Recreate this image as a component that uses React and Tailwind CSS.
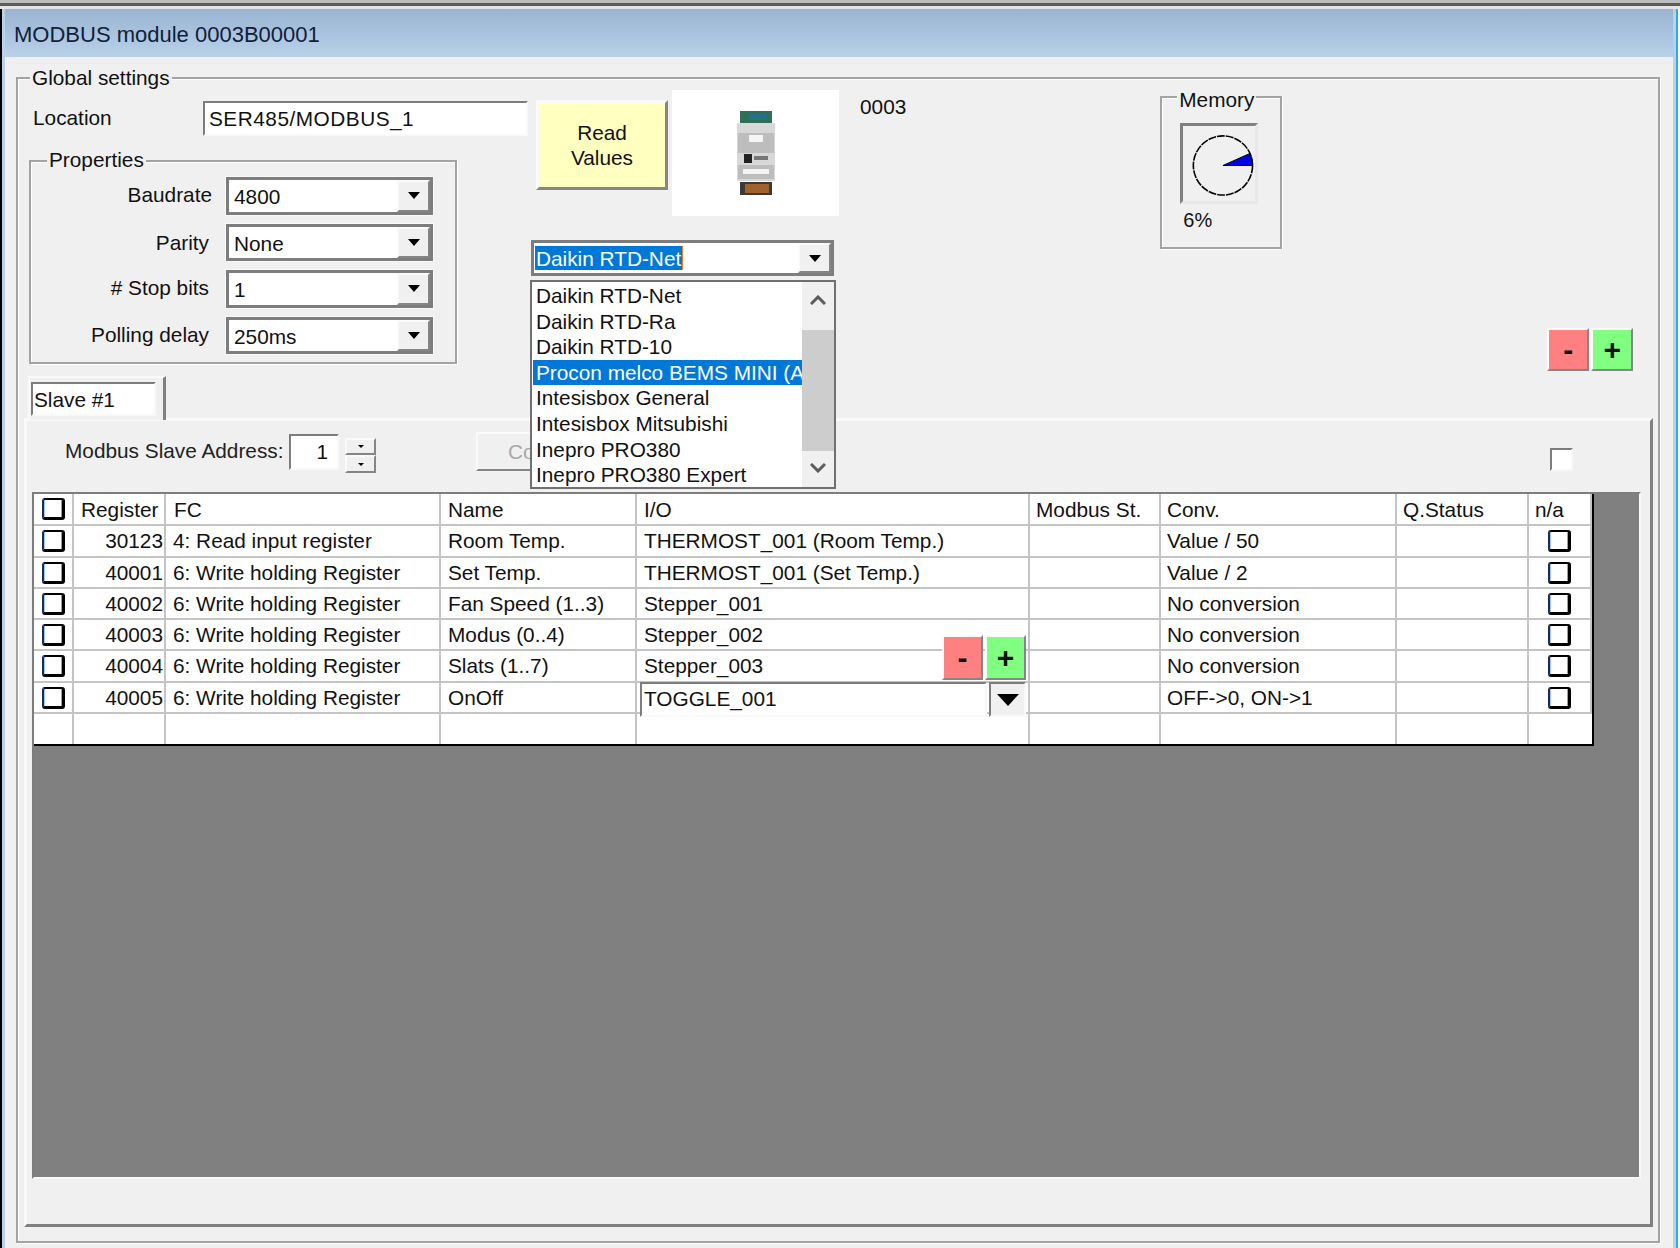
import React from 'react';

const sunken = 'border-2 border-t-[#7d7d7d] border-l-[#7d7d7d] border-r-[#f9f9f9] border-b-[#f9f9f9]';
const raised = 'border-2 border-t-[#fafafa] border-l-[#fafafa] border-r-[#858585] border-b-[#858585]';

const rows = [
  ['30123', '4: Read input register', 'Room Temp.', 'THERMOST_001 (Room Temp.)', 'Value / 50'],
  ['40001', '6: Write holding Register', 'Set Temp.', 'THERMOST_001 (Set Temp.)', 'Value / 2'],
  ['40002', '6: Write holding Register', 'Fan Speed (1..3)', 'Stepper_001', 'No conversion'],
  ['40003', '6: Write holding Register', 'Modus (0..4)', 'Stepper_002', 'No conversion'],
  ['40004', '6: Write holding Register', 'Slats (1..7)', 'Stepper_003', 'No conversion'],
  ['40005', '6: Write holding Register', 'OnOff', '', 'OFF->0, ON->1'],
];

const listItems = [
  'Daikin RTD-Net',
  'Daikin RTD-Ra',
  'Daikin RTD-10',
  'Procon melco BEMS MINI (A',
  'Intesisbox General',
  'Intesisbox Mitsubishi',
  'Inepro PRO380',
  'Inepro PRO380 Expert',
];

const gridCols = 'grid grid-cols-[40px_92px_275px_196px_393px_131px_236px_132px_63px]';
const cell = 'border-r-2 border-b-2 border-[#c4c4c4] h-[31.3px] leading-[30px] whitespace-nowrap overflow-hidden';
const head = 'border-r-2 border-b-2 border-[#c4c4c4] h-[32.3px] leading-[31px] whitespace-nowrap overflow-hidden';

const Arrow = ({ className = 'w-[12px] h-[7px]' }) => (
  <svg viewBox="0 0 14 8" className={className} preserveAspectRatio="none">
    <polygon points="0,0 14,0 7,8" fill="#000" />
  </svg>
);

const GroupBox = ({ label, className, labelClass, children }) => (
  <div className={`relative border-2 border-[#a3a3a3] shadow-[1px_1px_0_#fff,inset_1px_1px_0_#fff] ${className}`}>
    <span className={`absolute bg-[#f0f0f0] px-[2px] leading-[26px] ${labelClass}`}>{label}</span>
    {children}
  </div>
);

const Combo = ({ value }) => (
  <div className="flex h-[37.6px] w-[207px] border-[3px] border-[#7d7d7d] bg-white shadow-[0_0_0_1px_#fafafa]">
    <span className="pl-[5px] leading-[33px]">{value}</span>
    <div className={`ml-auto flex w-[33px] items-center justify-center bg-[#f0f0f0] ${raised}`}>
      <Arrow />
    </div>
  </div>
);

const CheckMark = () => (
  <div className="h-[22px] w-[23px] rounded-[3px] border-2 border-b-[3px] border-r-[3px] border-black border-l-[#1c2c4c] bg-white shadow-[inset_-1px_0_0_#e09040,inset_1px_0_0_#a0c8f0]" />
);

const PlusMinus = ({ small }) => (
  <div className="flex gap-[2px]">
    <button className={`${small ? 'h-[45px] w-[41px]' : 'h-[43px] w-[42px]'} ${raised} bg-[#ff8080] text-[30px] font-bold leading-none`}>-</button>
    <button className={`${small ? 'h-[45px] w-[41px]' : 'h-[43px] w-[42px]'} ${raised} bg-[#80ff80] text-[30px] font-bold leading-none`}>+</button>
  </div>
);

const ModuleImage = () => (
  <svg viewBox="0 0 38 84" className="h-[84px] w-[38px] blur-[0.6px]">
    <rect x="3" y="0" width="32" height="12" fill="#2f6f5a" />
    <rect x="12" y="3" width="18" height="6" fill="#27708c" />
    <rect x="0" y="12" width="38" height="58" fill="#d8d8d8" />
    <rect x="1" y="22" width="36" height="20" fill="#bdbdbd" />
    <rect x="12" y="24" width="14" height="7" fill="#f4f4f4" />
    <rect x="7" y="43" width="8" height="9" fill="#222" />
    <rect x="17" y="45" width="14" height="4" fill="#777" />
    <rect x="1" y="54" width="36" height="14" fill="#bdbdbd" />
    <rect x="6" y="58" width="26" height="5" fill="#f4f4f4" />
    <rect x="3" y="71" width="32" height="13" fill="#3a3a3a" />
    <rect x="8" y="73" width="24" height="9" fill="#a0622e" />
  </svg>
);

const Gauge = () => (
  <svg viewBox="0 0 72 76" className="h-full w-full">
    <circle cx="40" cy="40" r="30" fill="none" stroke="#000" strokeWidth="1.6" strokeDasharray="8 1" />
    <path d="M40 40 L70 40 A30 30 0 0 0 67.4 27.8 Z" fill="#0000e0" stroke="#000" strokeWidth="1" />
  </svg>
);

export default function App() {
  return (
    <div className="flex h-[1248px] w-[1680px] flex-col overflow-hidden bg-[#f0f0f0] text-[20.8px] text-[#111] [font-family:'Liberation_Sans',sans-serif]">
      <div className="h-[3px] bg-[#bcbcbc]" />
      <div className="h-[3px] bg-[#5c5c5c]" />
      <div className="h-[3px] bg-[#e4e4e4]" />

      <div className="flex min-h-0 flex-1">
        <div className="w-[2px] bg-black" />
        <div className="w-[3px] bg-[#b9d1ea]" />

        <div className="flex w-[1668px] flex-col">
          <div className="h-[48px] bg-gradient-to-b from-[#99b4d1] to-[#b9d1ea] pl-[9px] text-[22px] leading-[52px] text-[#10203a]">
            MODBUS module 0003B00001
          </div>

          <div className="flex-1 pb-[5px] pl-[11px] pr-[13px] pt-[20px]">
            <GroupBox label="Global settings" labelClass="left-[12px] top-[-14px]" className="h-[1166px] w-[1644px]">
              {/* top part of the dialog */}
              <div className="flex h-[297px]">
                <div className="ml-[11px] w-[499px] pt-[22px]">
                  <div className="flex h-[35px] items-center">
                    <span className="ml-[4px] w-[170px] pb-[2px]">Location</span>
                    <div className={`h-[35px] w-[325px] bg-white pl-[4px] leading-[32px] tracking-[0.5px] ${sunken}`}>
                      SER485/MODBUS_1
                    </div>
                  </div>
                  <GroupBox label="Properties" labelClass="left-[16px] top-[-15px]" className="mt-[24px] h-[204px] w-[428px]">
                    <div className="flex flex-col gap-[9px] pt-[15px]">
                      {[
                        ['Baudrate', '4800', 'pr-0 pb-[3px]'],
                        ['Parity', 'None', 'pr-[3px] pb-0'],
                        ['# Stop bits', '1', 'pr-[3px] pb-[3px]'],
                        ['Polling delay', '250ms', 'pr-[3px] pb-[2px]'],
                      ].map(([label, value, nudge]) => (
                        <div key={label} className="flex items-center gap-[17px]">
                          <span className={`w-[181px] text-right ${nudge}`}>{label}</span>
                          <div className="ml-[-3px]">
                            <Combo value={value} />
                          </div>
                        </div>
                      ))}
                    </div>
                  </GroupBox>
                </div>

                <div className="relative ml-[3px] w-[309px]">
                  <div className="flex items-start">
                    <button className={`ml-[5px] mt-[21px] h-[90px] w-[132px] bg-[#ffffc0] leading-[25px] ${raised} border-[3px]`}>
                      Read
                      <br />
                      Values
                    </button>
                    <div className="ml-[4px] mt-[11px] flex h-[126px] w-[167px] items-center justify-center bg-white">
                      <ModuleImage />
                    </div>
                  </div>
                  <div className="mt-[24px] flex h-[36px] w-[303px] border-[3px] border-[#7d7d7d] bg-white">
                    <span className="ml-[1px] mt-[3px] h-[24px] border-r border-[#f08020] bg-[#0078d7] pl-[1px] pr-[1px] leading-[25px] text-white">
                      Daikin RTD-Net
                    </span>
                    <div className={`ml-auto flex w-[33px] items-center justify-center bg-[#f0f0f0] ${raised}`}>
                      <Arrow />
                    </div>
                  </div>

                  {/* open drop down list */}
                  <div className="absolute left-[-1px] top-[201px] z-20 flex h-[209px] w-[306px] border-2 border-[#707070] bg-white">
                    <div className="w-[270px] pl-[1px] pt-[1px]">
                      {listItems.map((item) => (
                        <div
                          key={item}
                          className={`h-[25.6px] overflow-hidden whitespace-nowrap pl-[3px] leading-[25.6px] ${item.startsWith('Procon') ? 'bg-[#0078d7] text-white' : ''}`}
                        >
                          {item}
                        </div>
                      ))}
                    </div>
                    <div className="flex w-[32px] flex-col items-center bg-[#f0f0f0]">
                      <svg viewBox="0 0 16 10" className="mt-[13px] h-[10px] w-[16px]">
                        <polyline points="1,9 8,2 15,9" fill="none" stroke="#5c5c5c" strokeWidth="3" />
                      </svg>
                      <div className="mt-[25px] h-[121px] w-full bg-[#cdcdcd]" />
                      <svg viewBox="0 0 16 10" className="mt-[12px] h-[10px] w-[16px]">
                        <polyline points="1,1 8,8 15,1" fill="none" stroke="#5c5c5c" strokeWidth="3" />
                      </svg>
                    </div>
                  </div>
                </div>

                <span className="ml-[20px] mt-[15px] leading-[26px]">0003</span>

                <GroupBox label="Memory" labelClass="left-[15px] top-[-11px]" className="ml-[254px] mt-[17px] h-[153px] w-[122px]">
                  <div className={`ml-[18px] mt-[25px] h-[81px] w-[78px] border-[3px] border-b-[#e8e8e8] border-l-[#808080] border-r-[#e8e8e8] border-t-[#808080]`}>
                    <Gauge />
                  </div>
                  <span className="ml-[21px] text-[20px] leading-[32px]">6%</span>
                </GroupBox>

                <div className="ml-[265px] mt-[249px]">
                  <PlusMinus />
                </div>
              </div>

              {/* tab strip + page */}
              <div className="relative z-10 mb-[-2px] ml-[10px] h-[44px] w-[138px] border-r-[3px] border-t-2 border-l-2 border-l-[#fafafa] border-r-[#808080] border-t-[#fafafa] bg-[#f0f0f0] pl-[1px] pt-[4px]">
                <div className={`h-[34px] w-[125px] bg-white pl-[1px] leading-[31px] ${sunken}`}>Slave #1</div>
              </div>
              <div className="ml-[6px] h-[809px] w-[1629px] border-[3px] border-b-[#808080] border-l-[#fafafa] border-r-[#808080] border-t-[#fafafa]">
                <div className="flex h-[71px] items-start pt-[13px]">
                  <span className="ml-[38px] mt-[1px] w-[224px] pt-[1px] leading-[30px] text-[#222]">Modbus Slave Address:</span>
                  <div className={`flex h-[36px] w-[50px] items-center justify-end bg-white pr-[9px] ${sunken}`}>1</div>
                  <div className="ml-[6px] mt-[4px] w-[31px]">
                    <div className={`flex h-[17px] items-center justify-center ${raised}`}>
                      <Arrow className="h-[3px] w-[6px]" />
                    </div>
                    <div className={`flex h-[18px] items-center justify-center ${raised}`}>
                      <Arrow className="h-[3px] w-[6px]" />
                    </div>
                  </div>
                  <div className={`ml-[100px] mt-[-2px] h-[39px] w-[120px] pl-[30px] leading-[35px] text-[#a8a8a8] ${raised}`}>Co</div>
                  <div className={`ml-auto mr-[77px] mt-[14px] h-[23px] w-[23px] bg-white ${sunken}`} />
                </div>

                {/* register grid */}
                <div className={`mb-[48px] ml-[5px] h-[687px] w-[1609px] bg-[#808080] ${sunken}`}>
                  <div className="relative w-[1560px] border-b-2 border-r-2 border-black bg-white">
                    <div className={gridCols}>
                      <div className={`${head} pl-[8px] pt-[4px]`}><CheckMark /></div>
                      <div className={`${head} pl-[7px]`}>Register</div>
                      <div className={`${head} pl-[8px]`}>FC</div>
                      <div className={`${head} pl-[7px]`}>Name</div>
                      <div className={`${head} pl-[7px]`}>I/O</div>
                      <div className={`${head} pl-[6px]`}>Modbus St.</div>
                      <div className={`${head} pl-[6px]`}>Conv.</div>
                      <div className={`${head} pl-[6px]`}>Q.Status</div>
                      <div className={`${head} border-r-0 pl-[6px]`}>n/a</div>

                      {rows.map((row) => (
                        <React.Fragment key={row[0]}>
                          <div className={`${cell} pl-[8px] pt-[4px]`}><CheckMark /></div>
                          <div className={`${cell} pr-[1px] text-right`}>{row[0]}</div>
                          <div className={`${cell} pl-[7px]`}>{row[1]}</div>
                          <div className={`${cell} pl-[7px]`}>{row[2]}</div>
                          <div className={`${cell} pl-[7px]`}>{row[3]}</div>
                          <div className={cell} />
                          <div className={`${cell} pl-[6px]`}>{row[4]}</div>
                          <div className={cell} />
                          <div className={`${cell} border-r-0 pl-[19px] pt-[4px]`}><CheckMark /></div>
                        </React.Fragment>
                      ))}

                      {[0, 1, 2, 3, 4, 5, 6, 7].map((i) => (
                        <div key={i} className="h-[30px] border-r-2 border-[#c4c4c4]" />
                      ))}
                      <div className="h-[30px]" />
                    </div>

                    {/* in-place editor on the selected row */}
                    <div className="absolute left-[606px] top-[188px] flex h-[35px] w-[386px]">
                      <div className={`h-[35px] w-[347px] bg-white pl-[2px] leading-[29px] ${sunken}`}>TOGGLE_001</div>
                      <div className={`ml-[2px] flex h-[35px] w-[37px] items-center justify-center bg-[#f0f0f0] ${sunken}`}>
                        <Arrow className="h-[12px] w-[22px]" />
                      </div>
                    </div>
                    <div className="absolute left-[908px] top-[141px]">
                      <PlusMinus small />
                    </div>
                  </div>
                </div>
              </div>
            </GroupBox>
          </div>
        </div>

        <div className="w-[3px] bg-[#b9d1ea]" />
        <div className="w-[2px] bg-[#33a9dd]" />
        <div className="w-[2px] bg-white" />
      </div>
    </div>
  );
}
